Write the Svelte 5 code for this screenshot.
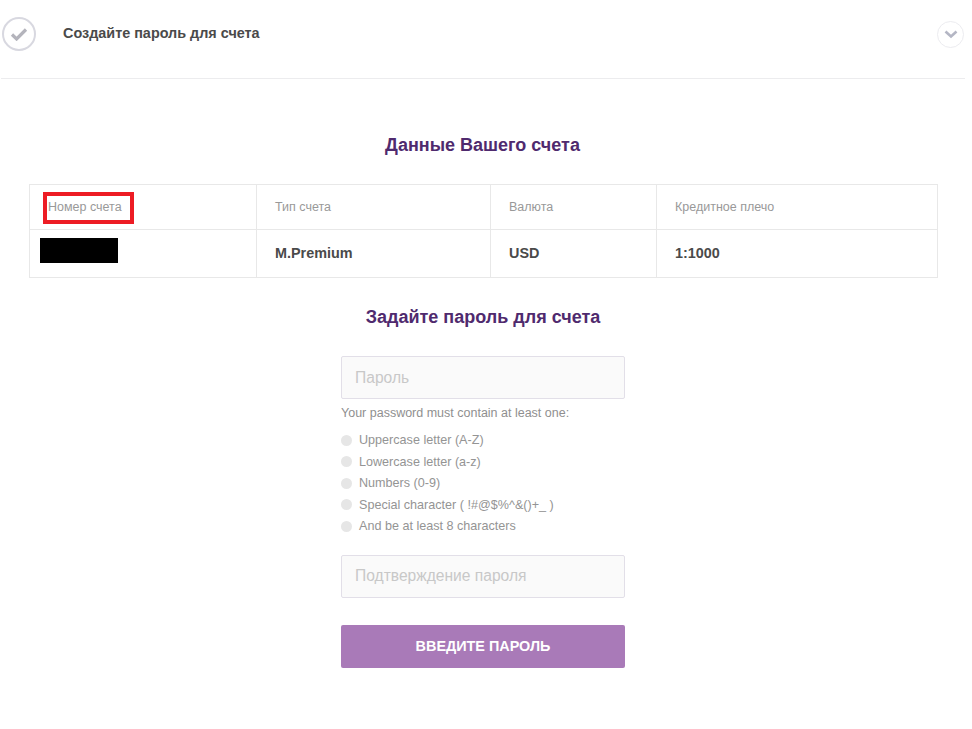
<script>
  const rules = [
    "Uppercase letter (A-Z)",
    "Lowercase letter (a-z)",
    "Numbers (0-9)",
    "Special character ( !#@$%^&()+_ )",
    "And be at least 8 characters",
  ];
  const columns = [
    { label: "Номер счета", value: "", width: 226 },
    { label: "Тип счета", value: "M.Premium", width: 234 },
    { label: "Валюта", value: "USD", width: 166 },
    { label: "Кредитное плечо", value: "1:1000", width: 281 },
  ];
</script>

<div class="page">
  <header class="step">
    <span class="check">
      <svg width="18" height="14" viewBox="0 0 18 14">
        <path d="M2 7.5l4.6 4.5L16 2.5" fill="none" stroke="#b4b4bc" stroke-width="3.2" />
      </svg>
    </span>
    <h2>Создайте пароль для счета</h2>
    <span class="toggle">
      <svg width="14" height="9" viewBox="0 0 14 9">
        <path d="M1.5 1.5L7 6.5l5.5-5" fill="none" stroke="#b4b6c4" stroke-width="2.6" />
      </svg>
    </span>
  </header>

  <h3 class="title-account">Данные Вашего счета</h3>

  <div class="table">
    {#each columns as col, i}
      <div class="col" style="width: {col.width}px">
        <div class="cell head">
          {#if i === 0}
            <span class="marked">{col.label}</span>
          {:else}
            {col.label}
          {/if}
        </div>
        <div class="cell val">
          {#if i === 0}
            <span class="redact"></span>
          {:else}
            {col.value}
          {/if}
        </div>
      </div>
    {/each}
  </div>

  <h3 class="title-password">Задайте пароль для счета</h3>

  <form class="form">
    <input type="password" placeholder="Пароль" />
    <p class="hint">Your password must contain at least one:</p>
    <ul>
      {#each rules as rule}
        <li><i></i>{rule}</li>
      {/each}
    </ul>
    <input type="password" placeholder="Подтверждение пароля" />
    <button type="button">ВВЕДИТЕ ПАРОЛЬ</button>
  </form>
</div>

<style>
  :global(body) {
    background: #fff;
    font-family: "Liberation Sans", Arial, sans-serif;
  }
  .page {
    height: 729px;
    overflow: hidden;
  }
  .step {
    display: flex;
    align-items: center;
    height: 79px;
    margin-left: 1px;
    margin-right: 7px;
    padding: 0 1px 10px 1px;
    box-sizing: border-box;
    border-bottom: 1px solid #ececee;
  }
  .check {
    display: flex;
    align-items: center;
    justify-content: center;
    width: 34px;
    height: 34px;
    box-sizing: border-box;
    border: 2px solid #d8d8e0;
    border-radius: 50%;
  }
  .step h2 {
    flex: 1;
    margin: 0 0 2px 27px;
    font-size: 14.4px;
    font-weight: 700;
    color: #4a4a4a;
  }
  .toggle {
    display: flex;
    align-items: center;
    justify-content: center;
    width: 27px;
    height: 27px;
    box-sizing: border-box;
    border: 1px solid #ececf0;
    border-radius: 50%;
  }
  h3 {
    margin: 0;
    text-align: center;
    font-size: 18px;
    line-height: 22px;
    font-weight: 700;
    color: #4f2a6e;
  }
  .title-account {
    margin-top: 55px;
    margin-right: 7px;
  }
  .table {
    display: flex;
    margin: 28px 0 0 29px;
    width: 909px;
    box-sizing: border-box;
    border: 1px solid #e8e8e8;
  }
  .col {
    box-sizing: border-box;
    border-left: 1px solid #e8e8e8;
  }
  .col:first-child {
    border-left: 0;
  }
  .cell {
    display: flex;
    align-items: center;
    padding-left: 18px;
    box-sizing: border-box;
  }
  .head {
    height: 45px;
    padding-bottom: 1px;
    border-bottom: 1px solid #e8e8e8;
    font-size: 12.5px;
    color: #999;
  }
  .val {
    height: 47px;
    padding-bottom: 2px;
    font-size: 14.4px;
    font-weight: 700;
    color: #4a4a4a;
  }
  .marked {
    display: block;
    position: relative;
  }
  .marked::after {
    content: "";
    position: absolute;
    left: -5px;
    top: -8px;
    width: 83px;
    height: 24px;
    border: 4px solid #ed1c24;
  }
  .redact {
    display: block;
    width: 78px;
    height: 25px;
    margin-left: -8px;
    margin-top: -4px;
    background: #000;
  }
  .title-password {
    margin-top: 28px;
    margin-right: 6px;
  }
  .form {
    width: 284px;
    margin: 28px 0 0 341px;
  }
  input {
    display: block;
    width: 100%;
    height: 43px;
    padding: 0 13px;
    box-sizing: border-box;
    background: #fafafa;
    border: 1px solid #e2dfe8;
    border-radius: 2px;
    font: 15.6px "Liberation Sans", Arial, sans-serif;
    outline: none;
  }
  input::placeholder {
    color: #c8c8c8;
    opacity: 1;
  }
  .hint {
    margin: 7px 0 0;
    font-size: 12.5px;
    line-height: 14px;
    color: #8f8f8f;
  }
  ul {
    list-style: none;
    margin: 9.3px 0 17.7px;
    padding: 0;
  }
  li {
    display: flex;
    align-items: center;
    height: 21.6px;
    font-size: 12.6px;
    color: #949494;
  }
  li i {
    width: 11px;
    height: 11px;
    margin-right: 7px;
    border-radius: 50%;
    background: #e6e6e6;
  }
  button {
    display: block;
    width: 100%;
    height: 43px;
    margin-top: 27px;
    border: 0;
    border-radius: 2px;
    background: #a97ab8;
    color: #fff;
    font: 700 14.4px "Liberation Sans", Arial, sans-serif;
  }
</style>
